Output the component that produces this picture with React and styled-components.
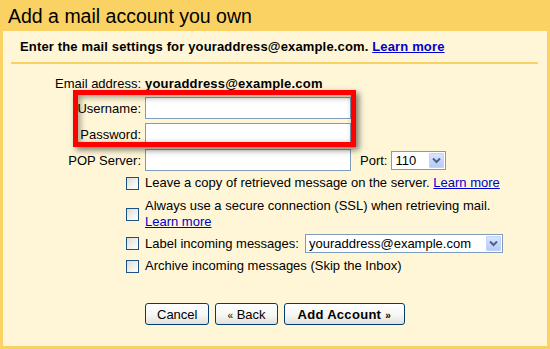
import React from "react";
import styled, { createGlobalStyle } from "styled-components";

const GlobalStyle = createGlobalStyle`
  html, body {
    margin: 0;
    padding: 0;
    background: #fad163;
    font-family: "Liberation Sans", Arial, sans-serif;
    font-size: 13px;
    color: #000;
  }
`;

const Frame = styled.div`
  width: 550px;
  height: 349px;
  box-sizing: border-box;
  padding: 0 3px 3px 3px;
  background: #fad163;
  display: flex;
  flex-direction: column;
`;

const Title = styled.h1`
  margin: 0;
  height: 31px;
  line-height: 33px;
  padding-left: 5px;
  font-size: 19.5px;
  font-weight: normal;
`;

const Panel = styled.div`
  flex: 1;
  background: #fff6d7;
  padding-top: 8px;
  display: flex;
  flex-direction: column;
`;

const Intro = styled.p`
  margin: 0 0 7px 17px;
  line-height: 16px;
  font-weight: bold;
  letter-spacing: 0.15px;
`;

const Divider = styled.div`
  height: 2px;
  margin: 0 9px 0 8px;
  background: #fad163;
`;

const Link = styled.a`
  color: #0000cc;
  text-decoration: underline;
  cursor: pointer;
`;

const Fields = styled.div`
  position: relative;
  margin-top: 9px;
  display: flex;
  flex-direction: column;
  gap: 4px;
`;

const Row = styled.div`
  display: flex;
  align-items: center;
  height: ${(p) => p.$h || 22}px;
`;

const Label = styled.label`
  width: 138px;
  text-align: right;
  margin-right: 4px;
  white-space: nowrap;
`;

const Value = styled.span`
  font-weight: bold;
  letter-spacing: 0.2px;
`;

const TextInput = styled.input`
  box-sizing: border-box;
  width: 206px;
  height: 22px;
  border: 1px solid #7f9db9;
  background: #fff;
  padding: 0 3px;
  font: inherit;
  outline: none;
`;

const PortLabel = styled.span`
  margin: 0 4px 0 9px;
`;

const Highlight = styled.div`
  position: absolute;
  left: 70px;
  top: 17px;
  width: 283px;
  height: 57px;
  box-sizing: border-box;
  border: 5px solid #ff0000;
  box-shadow: 3px 3px 6px rgba(0, 0, 0, 0.5),
    inset 2px 2px 6px rgba(0, 0, 0, 0.4);
  pointer-events: none;
`;

const Options = styled.div`
  display: flex;
  flex-direction: column;
  margin-left: 123px;
`;

const Option = styled.div`
  display: flex;
  align-items: center;
  gap: 6px;
  margin-top: ${(p) => p.$mt || 0}px;
  min-height: ${(p) => p.$h || 16}px;
  line-height: 16px;
`;

const Check = styled.input.attrs({ type: "checkbox" })`
  appearance: none;
  margin: 0;
  flex: none;
  width: 13px;
  height: 13px;
  box-sizing: border-box;
  border: 1px solid #1c5180;
  background: linear-gradient(135deg, #dcdcd7 0%, #f3f3ef 60%, #ffffff 100%);
`;

const SelectBox = styled.div`
  display: inline-flex;
  align-items: center;
  box-sizing: border-box;
  width: ${(p) => p.$w}px;
  height: 19px;
  border: 1px solid #7f9db9;
  background: #fff;
  padding: 1px;
`;

const SelectText = styled.span`
  flex: 1;
  padding-left: 2px;
  white-space: nowrap;
  overflow: hidden;
`;

const SelectButton = styled.span`
  width: 15px;
  height: 15px;
  flex: none;
  display: flex;
  align-items: center;
  justify-content: center;
  border: 1px solid #c3d3fd;
  box-sizing: border-box;
  border-radius: 1px;
  background: linear-gradient(#d9e4fd, #b6cafa);
`;

const Buttons = styled.div`
  display: flex;
  gap: 6px;
  margin: 29px 0 0 142px;
`;

const Button = styled.button`
  height: 22px;
  box-sizing: border-box;
  padding: 0 ${(p) => p.$px || 8}px;
  border: 1px solid #003c74;
  border-radius: 3px;
  background: linear-gradient(#ffffff 0%, #f6f6f3 55%, #e3e1d8 100%);
  font-family: "Liberation Sans", Arial, sans-serif;
  font-size: 13px;
  font-weight: ${(p) => (p.$primary ? "bold" : "normal")};
  letter-spacing: ${(p) => (p.$primary ? "0.3px" : "0")};
  color: #000;
  cursor: pointer;
`;

const Small = styled.span`
  font-size: 10px;
`;

const Chevron = () => (
  <svg width="9" height="7" viewBox="0 0 9 7">
    <path d="M1 1.5 L4.5 5 L8 1.5" fill="none" stroke="#4d6185" strokeWidth="2" />
  </svg>
);

const Select = ({ value, width }) => (
  <SelectBox $w={width}>
    <SelectText>{value}</SelectText>
    <SelectButton>
      <Chevron />
    </SelectButton>
  </SelectBox>
);

export default function App() {
  return (
    <>
      <GlobalStyle />
      <Frame>
        <Title>Add a mail account you own</Title>
        <Panel>
          <Intro>
            Enter the mail settings for youraddress@example.com.{" "}
            <Link>Learn more</Link>
          </Intro>
          <Divider />
          <Fields>
            <Row $h={20}>
              <Label>Email address:</Label>
              <Value>youraddress@example.com</Value>
            </Row>
            <Row>
              <Label>Username:</Label>
              <TextInput />
            </Row>
            <Row>
              <Label>Password:</Label>
              <TextInput type="password" />
            </Row>
            <Row>
              <Label>POP Server:</Label>
              <TextInput />
              <PortLabel>Port:</PortLabel>
              <Select value="110" width={55} />
            </Row>
            <Highlight />
          </Fields>
          <Options>
            <Option $mt={4}>
              <Check />
              <span>
                Leave a copy of retrieved message on the server.{" "}
                <Link>Learn more</Link>
              </span>
            </Option>
            <Option $mt={7}>
              <Check />
              <span>
                Always use a secure connection (SSL) when retrieving mail.
                <br />
                <Link>Learn more</Link>
              </span>
            </Option>
            <Option $mt={4} $h={19}>
              <Check />
              <span>Label incoming messages:</span>
              <Select value="youraddress@example.com" width={198} />
            </Option>
            <Option $mt={5}>
              <Check />
              <span>Archive incoming messages (Skip the Inbox)</span>
            </Option>
          </Options>
          <Buttons>
            <Button $px={11}>Cancel</Button>
            <Button $px={11}>
              <Small>«</Small> Back
            </Button>
            <Button $primary $px={13}>
              Add Account <Small>»</Small>
            </Button>
          </Buttons>
        </Panel>
      </Frame>
    </>
  );
}
